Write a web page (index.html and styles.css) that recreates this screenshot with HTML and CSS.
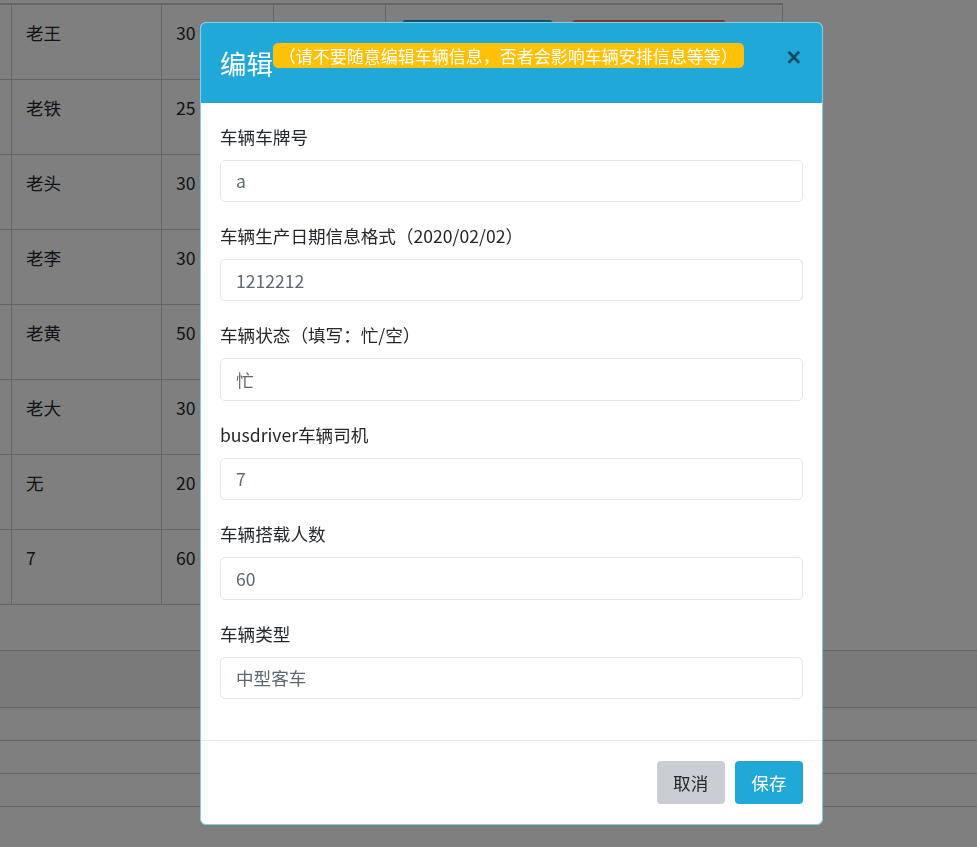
FILE: index.html
```html
<!DOCTYPE html>
<html lang="zh-CN">
<head>
    <meta charset="UTF-8">
    <meta name="viewport" content="width=device-width, initial-scale=1.0">
    <title>车辆管理</title>
    <link rel="stylesheet" href="styles.css">
</head>
<body>
    <div class="page">
        <div class="bus-table">
            <div class="bus-row">
                <div class="cell"></div><div class="cell">老王</div><div class="cell">30</div><div class="cell"></div>
                <div class="cell actions"><span class="btn-edit"></span><span class="btn-del"></span></div>
            </div>
            <div class="bus-row">
                <div class="cell"></div><div class="cell">老铁</div><div class="cell">25</div><div class="cell"></div><div class="cell"></div>
            </div>
            <div class="bus-row">
                <div class="cell"></div><div class="cell">老头</div><div class="cell">30</div><div class="cell"></div><div class="cell"></div>
            </div>
            <div class="bus-row">
                <div class="cell"></div><div class="cell">老李</div><div class="cell">30</div><div class="cell"></div><div class="cell"></div>
            </div>
            <div class="bus-row">
                <div class="cell"></div><div class="cell">老黄</div><div class="cell">50</div><div class="cell"></div><div class="cell"></div>
            </div>
            <div class="bus-row">
                <div class="cell"></div><div class="cell">老大</div><div class="cell">30</div><div class="cell"></div><div class="cell"></div>
            </div>
            <div class="bus-row">
                <div class="cell"></div><div class="cell">无</div><div class="cell">20</div><div class="cell"></div><div class="cell"></div>
            </div>
            <div class="bus-row">
                <div class="cell"></div><div class="cell">7</div><div class="cell">60</div><div class="cell"></div><div class="cell"></div>
            </div>
        </div>
        <div class="page-footer"></div>
        <ul class="footer-links">
            <li></li>
            <li></li>
            <li></li>
        </ul>
    </div>

    <div class="backdrop"></div>

    <div class="modal">
        <div class="modal-content">
            <div class="modal-header">
                <h4 class="modal-title">编辑<span class="badge">（请不要随意编辑车辆信息，否者会影响车辆安排信息等等）</span></h4>
                <button class="close" type="button">×</button>
            </div>
            <form class="modal-body">
                <div class="form-group">
                    <label for="busId">车辆车牌号</label>
                    <input type="text" id="busId" value="a">
                </div>
                <div class="form-group">
                    <label for="busDate">车辆生产日期信息格式（2020/02/02）</label>
                    <input type="text" id="busDate" value="1212212">
                </div>
                <div class="form-group">
                    <label for="busState">车辆状态（填写：忙/空）</label>
                    <input type="text" id="busState" value="忙">
                </div>
                <div class="form-group">
                    <label for="busDriver">busdriver车辆司机</label>
                    <input type="text" id="busDriver" value="7">
                </div>
                <div class="form-group">
                    <label for="busSeats">车辆搭载人数</label>
                    <input type="text" id="busSeats" value="60">
                </div>
                <div class="form-group">
                    <label for="busType">车辆类型</label>
                    <input type="text" id="busType" value="中型客车">
                </div>
            </form>
            <div class="modal-footer">
                <button class="btn btn-secondary" type="button">取消</button>
                <button class="btn btn-primary" type="button">保存</button>
            </div>
        </div>
    </div>
</body>
</html>
```

FILE: styles.css
```css
body {
    margin: 0;
    font-family: "Noto Sans CJK SC", "Noto Sans", sans-serif;
    font-size: 17.6px;
    line-height: 1.5;
    color: #23282c;
    background-color: #fff;
    overflow: hidden;
}

.page {
    width: 977px;
}

/* background table */
.bus-table {
    width: 783px;
    margin-top: 3px;
    border-top: 2px solid #c8ced3;
}

.bus-row {
    display: grid;
    grid-template-columns: 12px 150px 112px 112px 397px;
    height: 75px;
    box-sizing: border-box;
    border-bottom: 1px solid #c8ced3;
}

.cell {
    border-right: 1px solid #c8ced3;
    padding: 15px 14px;
    line-height: 26px;
}

.cell:first-child {
    padding: 0;
}

.actions {
    display: flex;
    gap: 19px;
    padding-left: 16px;
}

.btn-edit,
.btn-del {
    display: block;
    width: 151px;
    height: 40px;
    border-radius: 4px;
    background-color: #20a8d8;
}

.btn-del {
    width: 154px;
    background-color: #f86c6b;
}

.page-footer {
    margin-top: 45px;
    height: 56px;
    background-color: #f5f5f5;
    border-top: 1px solid #c8ced3;
    border-bottom: 1px solid #c8ced3;
}

.footer-links {
    list-style: none;
    margin: 0;
    padding: 0;
}

.footer-links li {
    height: 32px;
    border-bottom: 1px solid #c8ced3;
}

/* modal */
.backdrop {
    position: fixed;
    inset: 0;
    background-color: rgba(0, 0, 0, 0.5);
}

.modal {
    position: fixed;
    top: 22px;
    left: 200px;
    width: 623px;
}

.modal-content {
    background-color: #fff;
    border: 1px solid #7fd0e4;
    border-radius: 6px;
    overflow: hidden;
}

.modal-header {
    display: flex;
    align-items: flex-start;
    justify-content: space-between;
    padding: 20px 19px;
    background-color: #20a8d8;
    color: #fff;
}

.modal-title {
    margin: 0;
    font-size: 26.4px;
    font-weight: 400;
    line-height: 39.6px;
}

.badge {
    display: inline-block;
    vertical-align: top;
    padding: 4px 6px;
    font-size: 17px;
    line-height: 17px;
    color: #fff;
    background-color: #ffc107;
    border-radius: 5px;
}

.close {
    margin: 2px -2px 0 0;
    padding: 0 4px;
    border: none;
    background: none;
    font-family: "Liberation Sans", sans-serif;
    font-size: 25px;
    font-weight: 700;
    line-height: 1;
    color: #000;
    opacity: 0.55;
    cursor: pointer;
}

.modal-body {
    padding: 21px 19px 20px;
}

.form-group {
    margin-bottom: 21px;
}

label {
    display: block;
    margin-bottom: 9.6px;
    line-height: 26.4px;
}

input[type="text"] {
    display: block;
    width: 100%;
    height: 42.4px;
    box-sizing: border-box;
    padding: 0 15px;
    border: 1px solid #e4e7ea;
    border-radius: 5px;
    font-family: inherit;
    font-size: 17.6px;
    color: #5c6873;
}

.modal-footer {
    display: flex;
    justify-content: flex-end;
    gap: 10px;
    padding: 20px 19px;
    border-top: 1px solid #e4e7ea;
}

.btn {
    height: 43px;
    padding: 0 15.5px;
    border: 1px solid transparent;
    border-radius: 4px;
    font-family: inherit;
    font-size: 17.6px;
    cursor: pointer;
}

.btn-secondary {
    background-color: #c8ced3;
    color: #23282c;
}

.btn-primary {
    background-color: #20a8d8;
    color: #fff;
}
```
